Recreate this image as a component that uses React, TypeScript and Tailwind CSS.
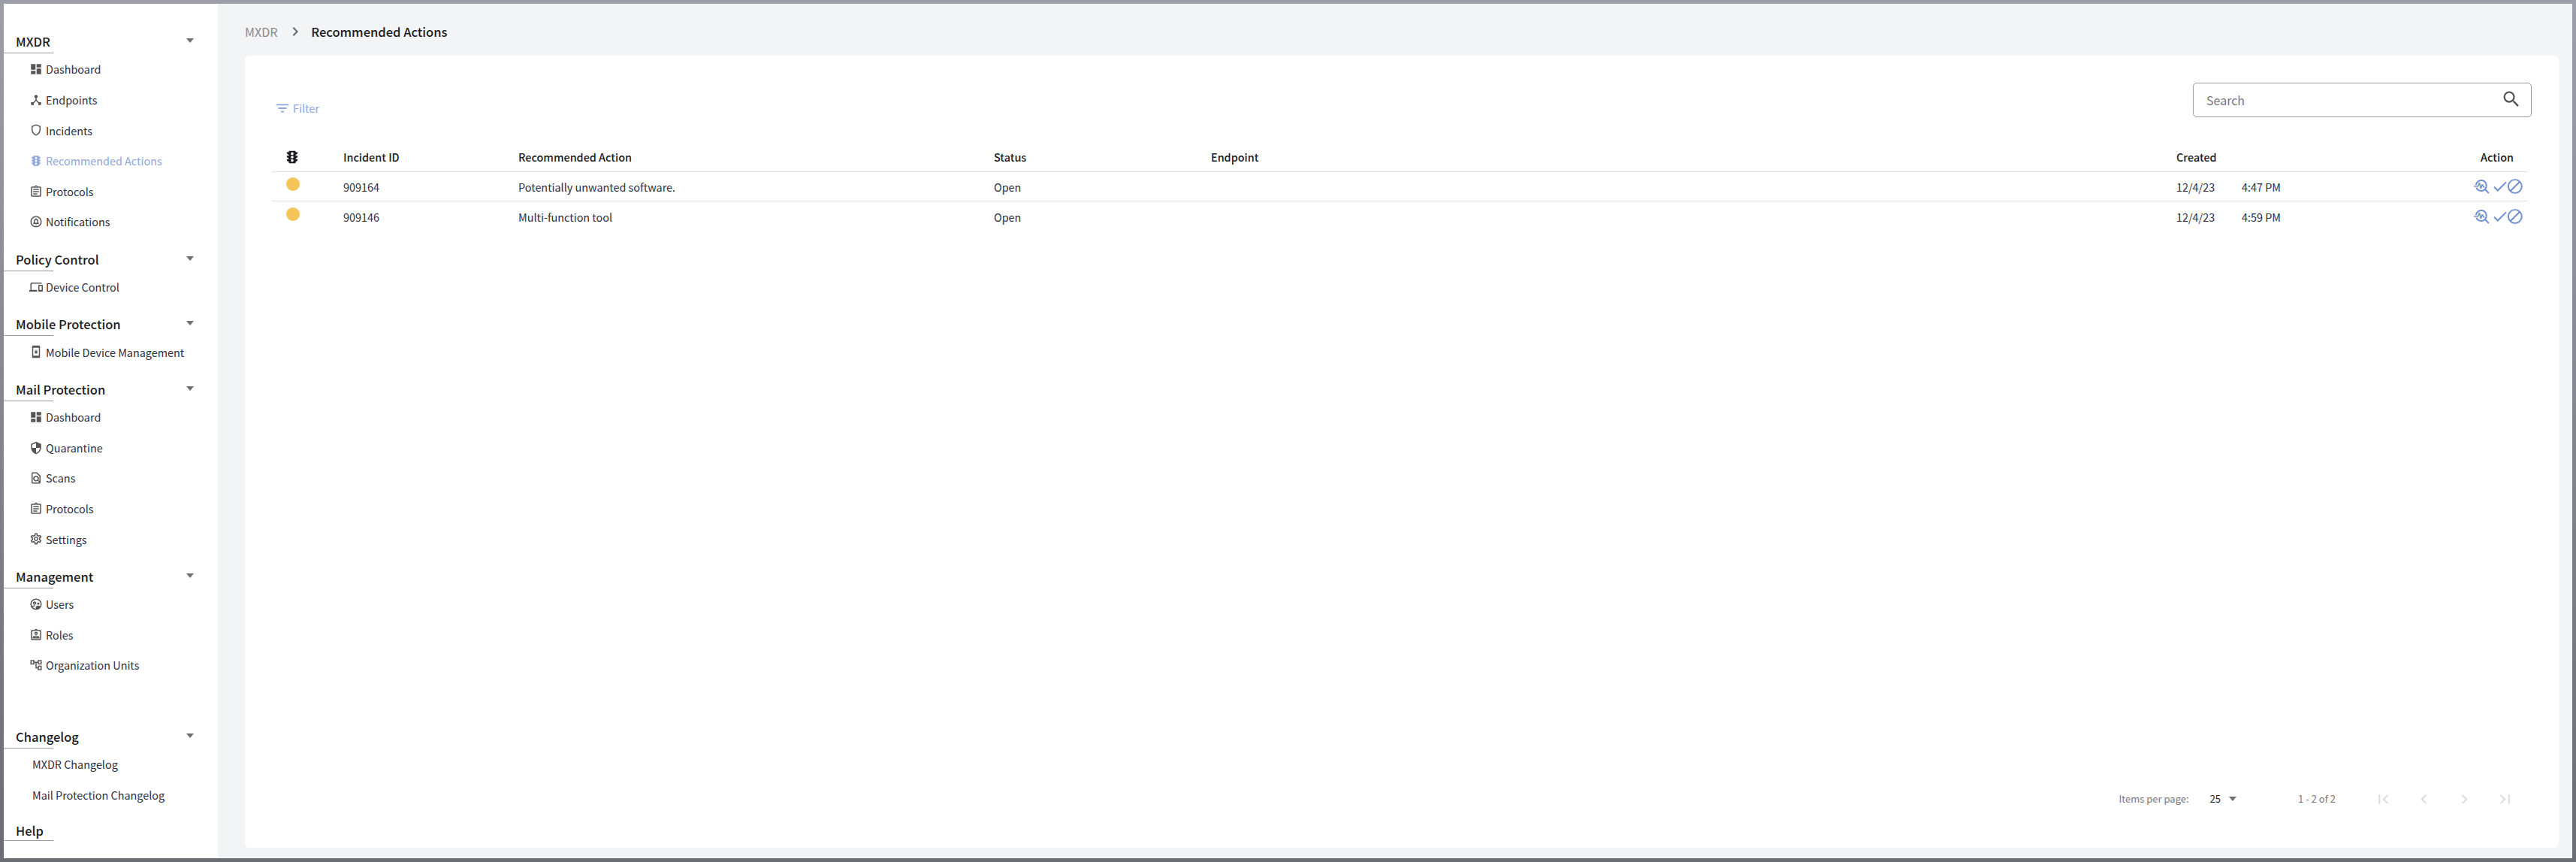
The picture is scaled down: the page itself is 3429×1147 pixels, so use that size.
import type { ComponentType, ReactNode } from "react";
import {
  MdDashboard,
  MdDeviceHub,
  MdOutlineShield,
  MdTraffic,
  MdOutlineAssignment,
  MdOutlineCircleNotifications,
  MdOutlineDevices,
  MdSecurity,
  MdOutlineFindInPage,
  MdOutlineSettings,
  MdOutlineSupervisedUserCircle,
  MdOutlineAssignmentInd,
  MdOutlineAccountTree,
  MdChevronRight,
  MdChevronLeft,
  MdFirstPage,
  MdLastPage,
  MdSearch,
  MdFilterList,
  MdOutlineTroubleshoot,
  MdCheck,
  MdOutlineBlock,
} from "react-icons/md";

type Icon = ComponentType<{ className?: string }>;

const PhoneLock: Icon = ({ className }) => (
  <svg viewBox="0 0 24 24" className={className} fill="currentColor">
    <path d="M7 1h10a2 2 0 0 1 2 2v18a2 2 0 0 1-2 2H7a2 2 0 0 1-2-2V3a2 2 0 0 1 2-2Zm0 4v14h10V5H7Zm2.800 5.600h.5V10a1.700 1.700 0 0 1 3.400 0v.6h.5V15H9.800Zm1.300 0h1.800V10a.9.900 0 0 0-1.800 0v.6Z" />
  </svg>
);

type Item = { label: string; icon?: Icon; active?: boolean };
type Section = { title: string; items: Item[]; gap?: boolean; short?: boolean };

const sections: Section[] = [
  {
    title: "MXDR",
    items: [
      { label: "Dashboard", icon: MdDashboard },
      { label: "Endpoints", icon: MdDeviceHub },
      { label: "Incidents", icon: MdOutlineShield },
      { label: "Recommended Actions", icon: MdTraffic, active: true },
      { label: "Protocols", icon: MdOutlineAssignment },
      { label: "Notifications", icon: MdOutlineCircleNotifications },
    ],
  },
  { title: "Policy Control", items: [{ label: "Device Control", icon: MdOutlineDevices }] },
  { title: "Mobile Protection", items: [{ label: "Mobile Device Management", icon: PhoneLock }] },
  {
    title: "Mail Protection",
    items: [
      { label: "Dashboard", icon: MdDashboard },
      { label: "Quarantine", icon: MdSecurity },
      { label: "Scans", icon: MdOutlineFindInPage },
      { label: "Protocols", icon: MdOutlineAssignment },
      { label: "Settings", icon: MdOutlineSettings },
    ],
  },
  {
    title: "Management",
    items: [
      { label: "Users", icon: MdOutlineSupervisedUserCircle },
      { label: "Roles", icon: MdOutlineAssignmentInd },
      { label: "Organization Units", icon: MdOutlineAccountTree },
    ],
  },
  {
    title: "Changelog",
    gap: true,
    items: [{ label: "MXDR Changelog" }, { label: "Mail Protection Changelog" }],
  },
  { title: "Help", items: [], short: true },
];

const rows = [
  { id: "909164", action: "Potentially unwanted software.", time: "4:47 PM" },
  { id: "909146", action: "Multi-function tool", time: "4:59 PM" },
];

const gridCols = "grid grid-cols-[95px_233px_633px_289px_1285px_87px_1fr_72px]";

const Caret = ({ className }: { className?: string }) => (
  <span
    className={`block h-0 w-0 border-x-[5.5px] border-t-[6px] border-x-transparent border-t-[#6f6f6f] ${className ?? ""}`}
  />
);

function SideSection({ section }: { section: Section }) {
  return (
    <div className={section.gap ? "mt-[45px]" : ""}>
      <div className={`relative flex items-center ${section.short ? "h-[42px]" : "h-[46px]"}`}>
        <span className="pl-4 pt-[15px] text-[16.500px] font-medium text-[#1b1b22]">{section.title}</span>
        <Caret className={section.short ? "hidden" : "absolute left-[243px] top-[26px]"} />
        <span className="absolute bottom-0 left-0 h-px w-[66px] bg-[#9a9a9a]" />
      </div>
      {section.items.map((item) => (
        <div
          key={item.label}
          className={`flex h-[40.6px] items-center pt-[2px] text-[14.400px] ${
            item.active ? "text-[#8ea6dc]" : "text-[#2c2f3f]"
          } ${item.icon ? "pl-[34px]" : "pl-[38px]"}`}
        >
          {item.icon && (
            <item.icon
              className={`mr-[4px] h-[18px] w-[18px] shrink-0 ${
                item.active ? "text-[#8ea6dc]" : "text-[#555555]"
              }`}
            />
          )}
          {item.label}
        </div>
      ))}
    </div>
  );
}

function HeadCell({ children, className }: { children?: ReactNode; className?: string }) {
  return <div className={`flex items-center text-[14.400px] font-medium text-[#1b1b22] ${className ?? ""}`}>{children}</div>;
}

export default function App() {
  return (
    <div
      className="h-screen w-screen overflow-hidden bg-gradient-to-b from-[#9e9ea8] to-[#6c6c74] p-[5px]"
      style={{ fontFamily: '"Noto Sans CJK SC", "Noto Sans", sans-serif' }}
    >
      <div className="flex h-full">
        <aside className="w-[285px] shrink-0 bg-white pt-[20px]">
          {sections.map((s) => (
            <SideSection key={s.title} section={s} />
          ))}
        </aside>
        <main className="flex min-w-0 flex-1 flex-col bg-[#f3f4f6] pb-[14px] pl-[36px] pr-[18px]">
          <div className="flex h-[69px] shrink-0 items-center pt-[5px] text-[16px]">
            <span className="text-[#8a8a8a]">MXDR</span>
            <MdChevronRight className="ml-[12px] mr-[9px] h-[24px] w-[24px] text-[#666666]" />
            <span className="text-[16.500px] font-medium text-[#1b1b22]">Recommended Actions</span>
          </div>
          <section className="flex min-h-0 flex-1 flex-col rounded-[6px] bg-white pl-[36px] pr-[42px]">
            <div className="flex h-[115px] shrink-0 items-start justify-between">
              <div className="mt-[59px] flex items-center gap-[3px] text-[14.400px] text-[#8ea6dc]">
                <MdFilterList className="ml-[3px] h-[22px] w-[22px]" />
                Filter
              </div>
              <div className="relative -mr-[6px] mt-[36px] flex h-[46px] w-[451px] items-center rounded-[5px] border border-[#9a9a9a] pl-[17px] text-[16px] text-[#777777]">
                Search
                <MdSearch className="absolute right-[12px] top-[7px] h-[28px] w-[28px] text-[#555555]" />
              </div>
            </div>
            <div className={`${gridCols} h-[40px] shrink-0 border-b border-[#dedede]`}>
              <HeadCell className="pl-[16px] text-[#1b1b22]">
                <MdTraffic className="h-[22px] w-[22px]" />
              </HeadCell>
              <HeadCell>Incident ID</HeadCell>
              <HeadCell>Recommended Action</HeadCell>
              <HeadCell>Status</HeadCell>
              <HeadCell>Endpoint</HeadCell>
              <HeadCell className="col-span-2">Created</HeadCell>
              <HeadCell className="justify-end pr-[18px]">Action</HeadCell>
            </div>
            {rows.map((row, i) => (
              <div
                key={row.id}
                className={`${gridCols} h-[39px] shrink-0 items-center text-[14.400px] text-[#2c2f3f] ${
                  i === 0 ? "border-b border-[#dedede]" : ""
                }`}
              >
                <div className="pl-[19px]">
                  <span className="-mt-[6px] block h-[18px] w-[18px] rounded-full bg-[#f4c45a]" />
                </div>
                <div className="pt-[2px]">{row.id}</div>
                <div className="pt-[2px]">{row.action}</div>
                <div className="pt-[2px]">Open</div>
                <div />
                <div className="pt-[2px]">12/4/23</div>
                <div className="pt-[2px]">{row.time}</div>
                <div className="flex items-center justify-end pr-[4px] text-[#6f8fd2]">
                  <MdOutlineTroubleshoot className="h-[24px] w-[24px]" />
                  <MdCheck className="h-[24px] w-[24px]" />
                  <MdOutlineBlock className="-ml-[3px] h-[24px] w-[24px]" />
                </div>
              </div>
            ))}
            <div className="flex flex-1 items-end">
              <div className="mb-[52px] ml-auto flex h-[26px] items-center text-[13px] text-[#777777]">
                <span>Items per page:</span>
                <span className="ml-[28px] text-[#1b1b22]">25</span>
                <Caret className="ml-[11px]" />
                <span className="ml-[82px]">1 - 2 of 2</span>
                <div className="ml-[51px] mr-[17px] flex items-center gap-[29px] text-[#dcdcdc]">
                  <MdFirstPage className="h-[25px] w-[25px]" />
                  <MdChevronLeft className="h-[25px] w-[25px]" />
                  <MdChevronRight className="h-[25px] w-[25px]" />
                  <MdLastPage className="h-[25px] w-[25px]" />
                </div>
              </div>
            </div>
          </section>
        </main>
      </div>
    </div>
  );
}
